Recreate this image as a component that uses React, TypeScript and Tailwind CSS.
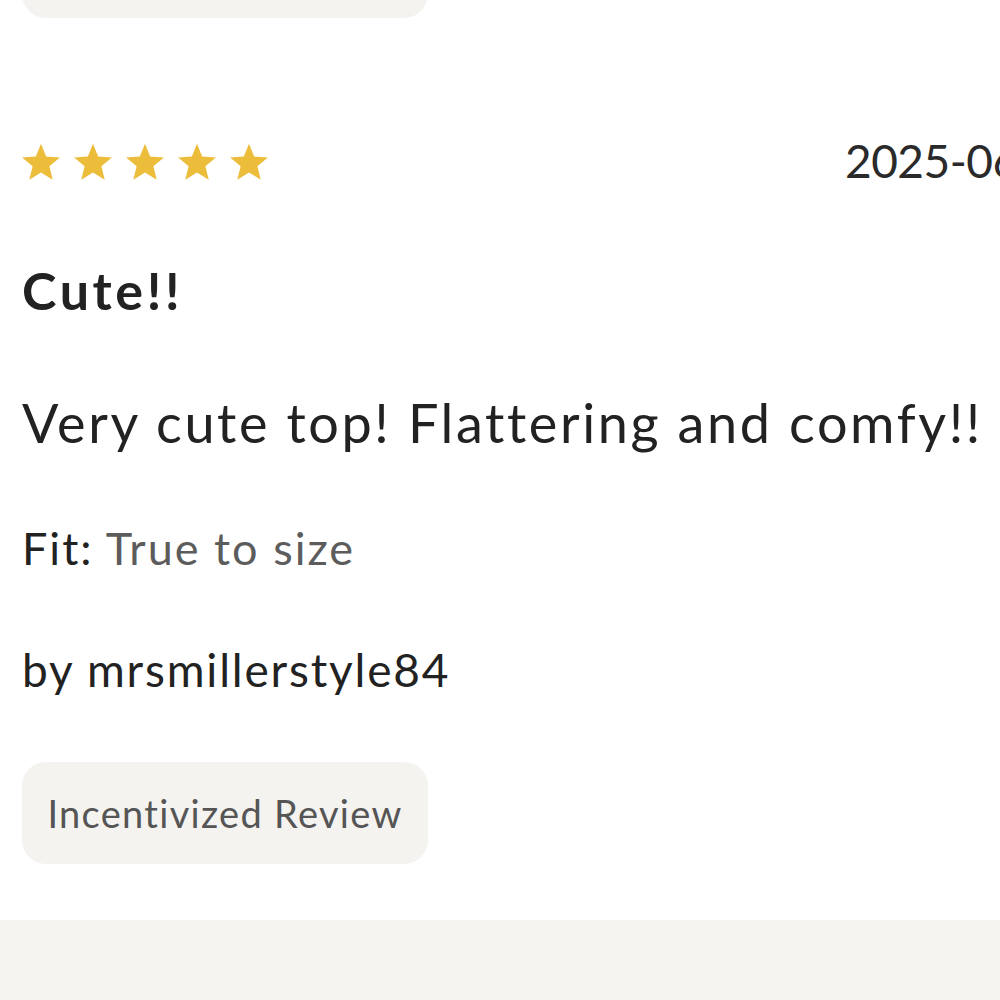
const Star = () => (
  <svg viewBox="0 0 24 24" className="w-[42px] h-[42px]" fill="#ecbd3a">
    <path d="M12 1.6l2.95 7.3 7.85.5-6 5.05 1.9 7.65L12 17.95l-6.7 4.15 1.9-7.65-6-5.05 7.85-.5z" />
  </svg>
);

const ReviewCard = () => {
  return (
    <div className="px-[22px]">
      <div className="flex items-center h-[44px] mt-[122px]">
        <div className="flex gap-[10px] -ml-[2px]">
          {[0, 1, 2, 3, 4].map((i) => (
            <Star key={i} />
          ))}
        </div>
        <span className="ml-auto -mr-[200px] w-[333px] -mt-[4px] text-[46px] tracking-[-0.5px] text-[#2a2a2a] whitespace-nowrap">
          2025-06-14
        </span>
      </div>
      <h3 className="mt-[80px] text-[52px] font-bold tracking-[3.6px] text-[#222] leading-none">
        Cute!!
      </h3>
      <p className="mt-[80px] text-[54px] tracking-[2.6px] text-[#222] leading-none whitespace-nowrap">
        Very cute top! Flattering and comfy!!
      </p>
      <p className="mt-[76px] text-[45px] tracking-[2px] leading-none text-[#222]">
        Fit: <span className="text-[#5c5c5c]">True to size</span>
      </p>
      <p className="mt-[76px] text-[46px] tracking-[1.8px] leading-none text-[#222]">
        by mrsmillerstyle84
      </p>
      <div className="mt-[69px] w-[406px] h-[102px] rounded-[24px] bg-[#f4f3f0] flex items-center justify-center">
        <span className="text-[38px] tracking-[1.3px] text-[#555]">Incentivized Review</span>
      </div>
    </div>
  );
};

export default function App() {
  return (
    <div
      className="w-[1000px] h-[1000px] overflow-hidden bg-white flex flex-col"
      style={{ fontFamily: "Lato, 'Noto Sans', sans-serif" }}
    >
      <div className="px-[22px]">
        <div className="-mt-[84px] w-[406px] h-[102px] rounded-[24px] bg-[#f4f3f0]" />
      </div>
      <ReviewCard />
      <div className="mt-auto h-[80px] bg-[#f6f4f1]" />
    </div>
  );
}
